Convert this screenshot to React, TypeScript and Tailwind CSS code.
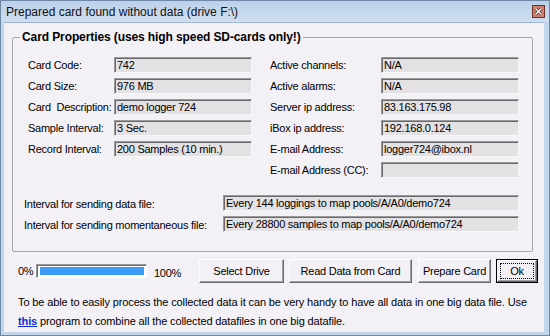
import React from 'react';

const leftRows = [
  { label: 'Card Code:', value: '742' },
  { label: 'Card Size:', value: '976 MB' },
  { label: 'Card  Description:', value: 'demo logger 724' },
  { label: 'Sample Interval:', value: '3 Sec.' },
  { label: 'Record Interval:', value: '200 Samples (10 min.)' },
];

const rightRows = [
  { label: 'Active channels:', value: 'N/A' },
  { label: 'Active alarms:', value: 'N/A' },
  { label: 'Server ip address:', value: '83.163.175.98' },
  { label: 'iBox ip address:', value: '192.168.0.124' },
  { label: 'E-mail Address:', value: 'logger724@ibox.nl' },
  { label: 'E-mail Address (CC):', value: '' },
];

const intervalRows = [
  { label: 'Interval for sending data file:', value: 'Every 144 loggings to map pools/A/A0/demo724' },
  { label: 'Interval for sending momentaneous file:', value: 'Every 28800 samples to map pools/A/A0/demo724' },
];

const Field: React.FC<{ value: string; width: string }> = ({ value, width }) => (
  <div
    className={`${width} h-[16px] bg-[#e3e1e4] border border-t-[#9a9a9a] border-l-[#9a9a9a] border-r-[#f7f7f7] border-b-[#f7f7f7] shadow-[inset_1px_1px_0_#6a6a6a] pl-[2px] leading-[14px] whitespace-pre overflow-hidden`}
  >
    {value}
  </div>
);

const Button: React.FC<{ label: string; width: string; focused?: boolean }> = ({ label, width, focused }) => {
  if (focused) {
    return (
      <div className={`${width} h-[24px] border border-black`}>
        <div className="h-full border border-t-white border-l-white border-r-[#696969] border-b-[#696969] shadow-[inset_-1px_-1px_0_#a0a0a0] p-[2px]">
          <div className="h-full border border-dotted border-black flex items-center justify-center">
            {label}
          </div>
        </div>
      </div>
    );
  }
  return (
    <div
      className={`${width} h-[24px] flex items-center justify-center whitespace-nowrap border border-t-white border-l-white border-r-[#696969] border-b-[#696969] shadow-[inset_-1px_-1px_0_#a0a0a0]`}
    >
      {label}
    </div>
  );
};

export default function App() {
  return (
    <div className="w-[550px] h-[336px] overflow-hidden bg-[#c3d6ec] border border-[#6f88a6] flex flex-col font-['Liberation_Sans',Arial,sans-serif] text-[11px] tracking-[-0.25px] text-black">
      {/* Title bar */}
      <div className="h-[21px] shrink-0 flex items-center justify-between pl-[5px] pr-[4px] bg-linear-to-b from-[#bcd1ea] to-[#cfdef0]">
        <span className="text-[12px] tracking-normal text-[#111]">Prepared card found without data (drive F:\)</span>
        <div className="w-[13px] h-[13px] bg-[#d4806f] border border-[#6b3128] flex items-center justify-center">
          <svg width="9" height="9" viewBox="0 0 9 9">
            <path d="M1.5 1.5 L7.5 7.5 M7.5 1.5 L1.5 7.5" stroke="#4a1c16" strokeWidth="3" />
            <path d="M1.5 1.5 L7.5 7.5 M7.5 1.5 L1.5 7.5" stroke="#ffffff" strokeWidth="1.5" />
          </svg>
        </div>
      </div>

      {/* Client area */}
      <div className="flex-1 ml-[3px] mr-[5px] mb-[3px] bg-[#f4f1f6] border-t border-[#9fb4cd] flex flex-col">
        <fieldset className="mt-[7px] ml-[8px] mr-[11px] border border-[#a5a5ad] rounded-[2px]">
          <legend className="ml-[7px] px-[2px] font-bold leading-[14px] text-[12px] tracking-[-0.1px]">
            Card Properties (uses high speed SD-cards only!)
          </legend>

          <div className="pt-[10px] pb-[17px] pl-[11px]">
            <div className="flex pl-[4px]">
              {/* Left column */}
              <div className="flex flex-col">
                {leftRows.map(r => (
                  <div key={r.label} className="h-[21px] flex items-center">
                    <span className="w-[86px] whitespace-pre pt-[2px]">{r.label}</span>
                    <Field value={r.value} width="w-[138px]" />
                  </div>
                ))}
              </div>

              {/* Right column */}
              <div className="flex flex-col ml-[18px]">
                {rightRows.map(r => (
                  <div key={r.label} className="h-[21px] flex items-center">
                    <span className="w-[111px] whitespace-pre pt-[2px]">{r.label}</span>
                    <Field value={r.value} width="w-[138px]" />
                  </div>
                ))}
              </div>
            </div>

            <div className="mt-[12px] flex flex-col">
              {intervalRows.map(r => (
                <div key={r.label} className="h-[21px] flex items-center">
                  <span className="w-[199px] pt-[3px]">{r.label}</span>
                  <Field value={r.value} width="w-[296px]" />
                </div>
              ))}
            </div>
          </div>
        </fieldset>

        {/* Progress and buttons */}
        <div className="mt-[7px] flex items-center pl-[14px] pr-[6px]">
          <span className="w-[18px]">0%</span>
          <div className="w-[111px] h-[14px] border border-t-[#9a9a9a] border-l-[#9a9a9a] border-r-white border-b-white shadow-[inset_1px_1px_0_#6a6a6a] p-[2px] pl-[3px] bg-white">
            <div className="w-full h-full bg-[#3a9bf6]" />
          </div>
          <span className="ml-[7px] pt-[4px]">100%</span>
          <div className="ml-auto flex items-center">
            <Button label="Select Drive" width="w-[85px]" />
            <div className="ml-[5px]"><Button label="Read Data from Card" width="w-[123px]" /></div>
            <div className="ml-[6px]"><Button label="Prepare Card" width="w-[73px]" /></div>
            <div className="ml-[5px]"><Button label="Ok" width="w-[42px]" focused /></div>
          </div>
        </div>

        <p className="mt-[10px] pl-[14px] leading-[19px] whitespace-nowrap tracking-[-0.12px]">
          To be able to easily process the collected data it can be very handy to have all data in one big data file. Use
          <br />
          <span className="font-bold underline text-[#0a2bd6]">this</span> program to combine all the collected datafiles in one big datafile.
        </p>
      </div>
    </div>
  );
}
